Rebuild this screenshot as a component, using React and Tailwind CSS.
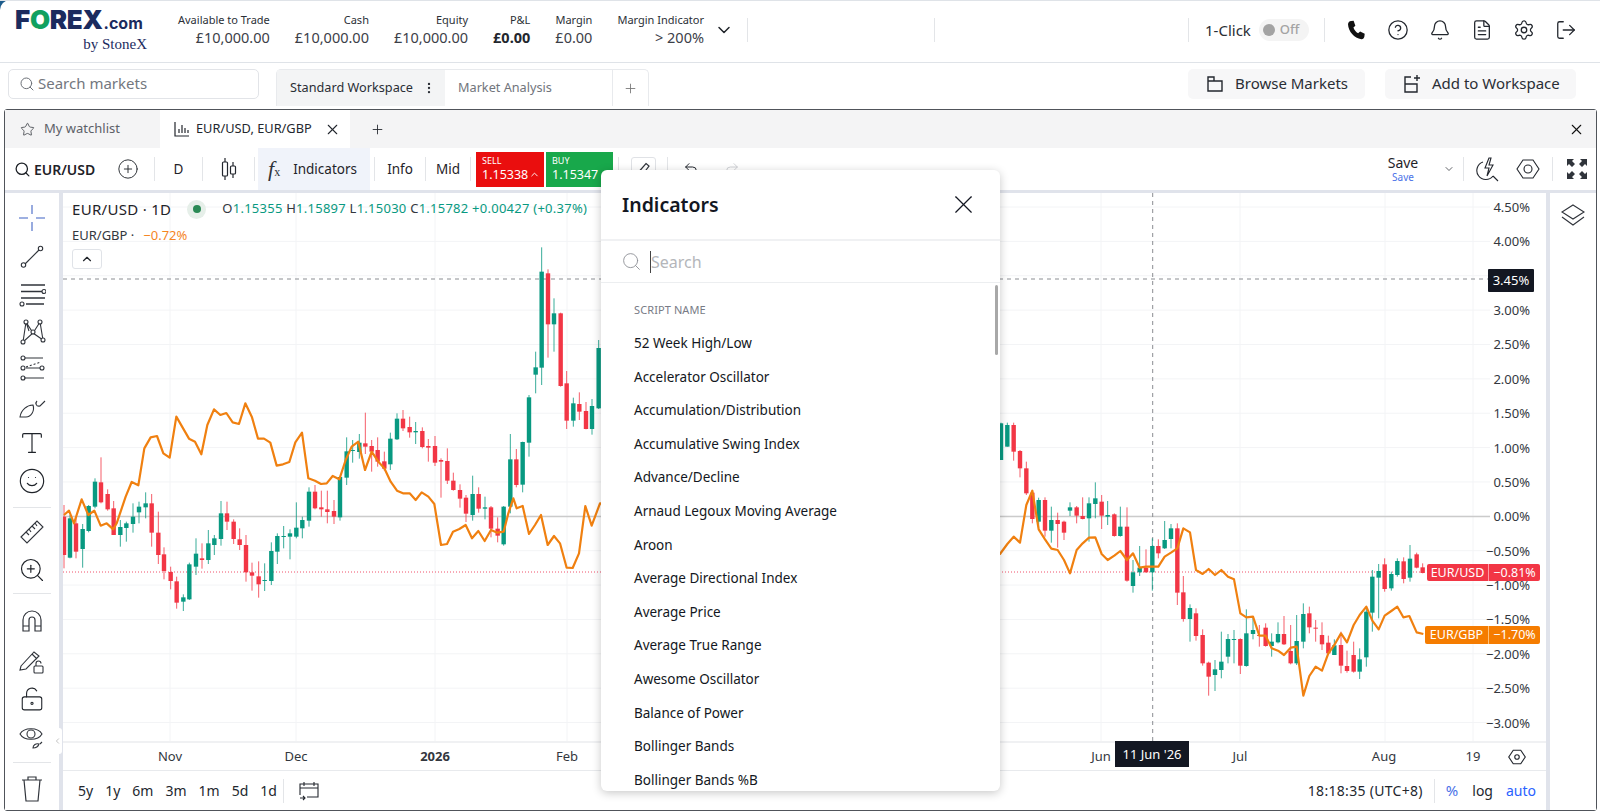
import React from "react";
import {
  Search,
  Star,
  X,
  Plus,
  CircleHelp,
  Bell,
  FileText,
  Settings,
  LogOut,
  ChevronDown,
  ChevronUp,
  ChevronLeft,
  CirclePlus,
  Undo2,
  Redo2,
  EllipsisVertical,
  ZoomIn,
  Smile,
  LockKeyholeOpen,
  Type,
} from "lucide-react";

// candle rows: [x, colour, high, bodyTop, bodyBottom, low], read from the zoomed crops
const g = "g";
const r = "r";
const mk = (ox, oy, rows) =>
  rows.map(([v, c, h, t, b, l]) => ({
    x: ox + v / 3,
    c,
    h: oy + h / 3,
    t: oy + t / 3,
    b: oy + b / 3,
    l: oy + l / 3,
  }));

const candles = [
  ...mk(60, 380, [
    [12, r, 375, 410, 525, 565],
    [30, g, 405, 415, 533, 535],
    [48, r, 410, 430, 515, 535],
    [68, g, 432, 447, 507, 563],
    [86, g, 375, 378, 453, 457],
    [105, g, 295, 305, 380, 385],
    [123, r, 232, 307, 367, 370],
    [143, r, 328, 342, 388, 392],
    [161, r, 363, 385, 465, 465],
    [181, g, 420, 441, 465, 500],
    [199, g, 425, 430, 444, 485],
    [219, g, 370, 410, 432, 458],
    [237, g, 365, 380, 397, 430],
    [257, g, 337, 370, 382, 415],
    [275, r, 342, 370, 458, 500],
    [295, r, 395, 458, 525, 552],
    [312, r, 502, 523, 573, 598],
    [332, r, 560, 576, 603, 628],
    [350, r, 590, 604, 668, 686],
    [370, g, 643, 652, 665, 693],
    [388, g, 548, 553, 658, 660],
    [408, g, 475, 521, 560, 585],
    [426, r, 490, 535, 540, 566],
    [445, g, 450, 490, 540, 552],
    [463, g, 465, 475, 495, 525],
    [483, g, 363, 400, 477, 497],
    [501, r, 365, 400, 425, 450],
    [521, r, 418, 425, 477, 492],
    [539, r, 445, 478, 495, 510],
    [558, r, 465, 495, 577, 605],
    [576, r, 548, 577, 587, 632],
    [596, r, 544, 589, 613, 653],
    [614, g, 550, 600, 603, 633],
    [634, g, 487, 513, 603, 615],
    [652, g, 460, 468, 515, 552],
    [671, g, 438, 468, 470, 505],
    [690, g, 448, 460, 470, 538],
    [709, g, 367, 443, 470, 475],
    [727, g, 410, 420, 445, 475],
    [747, g, 322, 335, 422, 440],
  ]),
  ...mk(300, 230, [
    [45, r, 765, 785, 835, 838],
    [64, r, 782, 832, 838, 860],
    [82, r, 782, 838, 846, 880],
    [102, r, 810, 843, 860, 882],
    [120, g, 740, 741, 862, 872],
    [140, g, 622, 664, 743, 765],
    [158, g, 630, 660, 662, 698],
    [178, g, 612, 638, 666, 686],
    [196, r, 548, 640, 650, 672],
    [215, r, 630, 648, 665, 725],
    [233, r, 622, 660, 695, 710],
    [253, r, 665, 694, 716, 722],
    [271, g, 608, 626, 703, 720],
    [291, g, 550, 566, 628, 630],
    [309, r, 540, 566, 595, 603],
    [329, r, 560, 591, 607, 623],
    [347, g, 576, 603, 607, 642],
    [367, r, 592, 603, 651, 655],
    [385, r, 627, 648, 653, 695],
    [405, r, 618, 648, 698, 708],
    [423, r, 685, 690, 695, 803],
    [442, r, 655, 693, 752, 762],
    [460, r, 728, 752, 780, 782],
    [480, r, 763, 780, 806, 833],
    [498, r, 795, 803, 851, 876],
    [518, g, 737, 792, 855, 872],
    [536, r, 772, 792, 836, 848],
    [555, g, 800, 832, 836, 868],
    [573, r, 828, 832, 896, 922],
    [593, r, 862, 896, 917, 937],
    [611, g, 828, 830, 943, 947],
    [631, g, 612, 688, 830, 850],
    [649, r, 657, 688, 765, 772],
    [668, g, 635, 636, 764, 787],
    [687, g, 495, 502, 638, 680],
    [707, g, 365, 412, 434, 490],
    [725, g, 52, 125, 413, 465],
    [744, r, 118, 130, 283, 383],
    [762, g, 205, 250, 283, 365],
    [782, r, 248, 250, 468, 470],
    [800, r, 423, 460, 572, 597],
    [820, g, 503, 520, 572, 590],
    [838, r, 487, 522, 545, 570],
    [858, r, 516, 543, 597, 598],
    [876, g, 507, 528, 597, 614],
    [896, g, 330, 354, 535, 537],
  ]),
  ...mk(1000, 400, [
    [3, g, 68, 70, 180, 180],
    [22, g, 68, 75, 140, 140],
    [41, r, 68, 75, 155, 182],
    [60, r, 150, 153, 205, 232],
    [79, r, 185, 205, 280, 285],
    [97, r, 270, 278, 357, 370],
    [116, g, 293, 300, 365, 385],
    [135, r, 292, 300, 392, 410],
    [154, g, 320, 360, 392, 428],
    [173, r, 338, 360, 372, 443],
    [192, r, 362, 365, 398, 420],
    [210, g, 307, 322, 332, 348],
    [230, r, 318, 322, 347, 370],
    [248, r, 292, 348, 357, 358],
    [267, g, 292, 310, 355, 425],
    [286, g, 247, 295, 312, 355],
    [305, r, 285, 305, 347, 387],
    [323, g, 303, 345, 350, 375],
    [343, r, 340, 343, 408, 410],
    [361, g, 320, 380, 408, 410],
    [381, r, 322, 380, 542, 545],
    [399, g, 480, 517, 558, 578],
    [419, g, 438, 503, 517, 528],
    [438, r, 448, 503, 517, 518],
    [457, g, 415, 438, 517, 572],
    [475, r, 418, 438, 460, 475],
    [494, g, 363, 420, 445, 447],
    [513, g, 372, 385, 417, 445],
    [532, r, 370, 385, 578, 615],
    [550, r, 528, 577, 657, 665],
    [570, g, 613, 624, 657, 725],
    [588, r, 625, 640, 708, 722],
    [608, r, 688, 705, 790, 797],
    [626, r, 785, 788, 830, 887],
    [645, g, 780, 808, 825, 873],
    [664, g, 695, 785, 810, 835],
    [684, g, 702, 717, 770, 790],
    [702, g, 690, 717, 719, 790],
    [721, r, 715, 717, 797, 822],
    [739, g, 628, 700, 798, 800],
    [759, g, 648, 690, 702, 718],
    [778, r, 675, 705, 707, 740],
    [797, r, 670, 683, 738, 740],
    [815, g, 700, 725, 738, 770],
    [834, g, 667, 702, 727, 730],
    [852, r, 648, 702, 733, 735],
    [872, r, 675, 753, 790, 793],
    [890, g, 645, 723, 790, 795],
    [910, g, 610, 642, 725, 745],
    [928, r, 620, 640, 682, 700],
    [947, r, 660, 683, 685, 725],
    [966, r, 667, 705, 733, 750],
    [985, r, 707, 728, 760, 762],
    [1003, g, 718, 736, 765, 765],
    [1023, r, 695, 735, 797, 820],
    [1041, r, 752, 798, 813, 818],
    [1061, r, 725, 765, 815, 818],
    [1079, g, 745, 778, 815, 837],
    [1099, g, 620, 635, 772, 800],
    [1117, g, 510, 530, 638, 695],
    [1136, g, 492, 513, 533, 655],
    [1154, r, 475, 493, 567, 575],
    [1174, g, 515, 522, 565, 572],
    [1192, g, 475, 483, 525, 530],
  ]),
  ...mk(1280, 540, [
    [371, r, 52, 64, 117, 130],
    [390, g, 15, 56, 113, 125],
    [410, r, 38, 43, 83, 85],
    [428, r, 70, 82, 99, 100],
  ]),
];

const pts = (ox, oy, list) => list.map(([x, y]) => `${ox + x / 3},${oy + y / 3}`).join(" ");

const orange = [
  pts(60, 380, [[12, 405], [27, 392], [42, 430], [65, 358], [85, 405], [103, 392], [122, 437], [140, 430], [160, 448], [170, 430], [197, 350], [215, 306], [235, 316], [253, 205], [272, 172], [291, 168], [310, 220], [329, 233], [349, 110], [368, 143], [387, 176], [405, 185], [424, 223], [442, 135], [462, 88], [481, 105], [499, 99], [518, 127], [537, 132], [556, 70], [576, 112], [594, 176], [612, 176], [631, 188], [650, 257], [669, 253], [688, 246], [706, 187], [726, 158]]),
  pts(300, 230, [[25, 745], [45, 752], [63, 762], [80, 760], [98, 738], [118, 748], [137, 690], [155, 650], [175, 635], [195, 720], [215, 665], [235, 695], [253, 715], [272, 755], [291, 782], [309, 790], [329, 790], [347, 810], [365, 787], [385, 800], [403, 822], [423, 945], [441, 942], [459, 905], [478, 897], [497, 885], [516, 925], [535, 903], [554, 933], [573, 900], [592, 908], [611, 905], [625, 850], [640, 805], [650, 835], [668, 828], [687, 912], [705, 885], [723, 855], [743, 945], [762, 918], [780, 940], [800, 1013], [818, 1014], [837, 970], [856, 828], [875, 887], [900, 820]]),
  pts(1000, 400, [[0, 462], [22, 432], [41, 410], [60, 428], [79, 315], [97, 272], [116, 388], [135, 418], [154, 446], [173, 450], [192, 480], [210, 520], [230, 450], [248, 430], [267, 413], [286, 412], [305, 462], [323, 480], [343, 467], [361, 453], [381, 480], [399, 460], [419, 503], [438, 500], [457, 500], [475, 500], [494, 470], [513, 458], [532, 445], [550, 385], [570, 397], [588, 510], [608, 522], [626, 507], [645, 525], [664, 510], [684, 530], [702, 538], [721, 640], [739, 652], [759, 650], [778, 707], [797, 707], [815, 745], [834, 752], [852, 765], [872, 743], [890, 740], [910, 887], [928, 828], [947, 800], [966, 812], [985, 760], [1003, 735], [1023, 700], [1041, 727], [1061, 675], [1079, 645], [1099, 620], [1117, 662], [1136, 688], [1154, 647], [1174, 633], [1192, 620]]),
  pts(1280, 540, [[370, 232], [388, 228], [410, 277], [430, 282]]),
].join(" ");

const priceLabels = [
  "4.50%", "4.00%", "3.50%", "3.00%", "2.50%", "2.00%", "1.50%", "1.00%", "0.50%", "0.00%",
  "−0.50%", "−1.00%", "−1.50%", "−2.00%", "−2.50%", "−3.00%",
];
const gridY = priceLabels.map((_, i) => 207 + i * 34.37);
const gridX = [170, 296, 435, 567, 1101, 1240, 1385, 1473];

const scripts = [
  "52 Week High/Low",
  "Accelerator Oscillator",
  "Accumulation/Distribution",
  "Accumulative Swing Index",
  "Advance/Decline",
  "Arnaud Legoux Moving Average",
  "Aroon",
  "Average Directional Index",
  "Average Price",
  "Average True Range",
  "Awesome Oscillator",
  "Balance of Power",
  "Bollinger Bands",
  "Bollinger Bands %B",
];

const Stat = ({ label, value, bold }) => (
  <div className="flex flex-col items-end">
    <span className="text-[11px] leading-[16px] text-[#2b2f36] whitespace-nowrap">{label}</span>
    <span className={`text-[14.5px] leading-[18px] whitespace-nowrap ${bold ? "font-bold text-[#23272e]" : "text-[#3c4048]"}`}>
      {value}
    </span>
  </div>
);

const Divider = ({ h = "h-[24px]" }) => <div className={`w-px bg-[#e3e5e8] ${h}`} />;

// thin line tool icons for the left drawing column
const Tool = ({ children }) => (
  <svg width="28" height="28" viewBox="0 0 28 28" fill="none" stroke="#30343b" strokeWidth="1.1" className="block">
    {children}
  </svg>
);

const tools = [
  (
    <Tool>
      <path d="M14 1v9M14 18v9M1 14h9M18 14h9" stroke="#7f97d8" strokeWidth="1.6" />
    </Tool>
  ),
  (
    <Tool>
      <path d="M7 22 21 8" />
      <circle cx="5.5" cy="23" r="2.2" />
      <circle cx="22.5" cy="6.5" r="2.2" />
    </Tool>
  ),
  (
    <Tool>
      <path d="M3 6h24M3 12.5h21M3 19h24M8 25h18" strokeWidth="1.4" />
      <circle cx="26" cy="12.5" r="2" />
      <circle cx="4" cy="25" r="2" />
    </Tool>
  ),
  (
    <Tool>
      <path d="m8 5 7 11-10 9M8 5 5 25M22 5l-7 11 10 7M22 5l3 18M8 5l3 9" />
      <circle cx="8" cy="5" r="2" fill="#fff" />
      <circle cx="22" cy="5" r="2" fill="#fff" />
      <circle cx="15" cy="15" r="2" fill="#fff" />
      <circle cx="5" cy="25" r="2" fill="#fff" />
      <circle cx="25" cy="23" r="2" fill="#fff" />
    </Tool>
  ),
  (
    <Tool>
      <path d="M7 4h18M8 14h14M6 24h20" />
      <path d="M8 13l15-5" strokeDasharray="2 2" />
      <circle cx="5" cy="4" r="2" />
      <circle cx="5" cy="14" r="2" />
      <circle cx="24" cy="14" r="2" />
      <circle cx="5" cy="24" r="2" />
    </Tool>
  ),
  (
    <Tool>
      <path d="M2 25c1-7 7-12 13-12 2 6-2 12-7 12H2Z" />
      <path d="M19 9c-2 2-1 6 3 5l5-5" />
    </Tool>
  ),
];

const App = () => {
  return (
    <div className="w-[1600px] h-[811px] overflow-hidden bg-[#1d5c8c] font-['Noto_Sans',sans-serif] text-[#1f2329]">
      <div className="relative w-full h-full bg-white rounded-tl-[10px] flex flex-col">
        {/* account header */}
        <header className="h-[63px] shrink-0 flex items-center pb-[3px] border-t border-b border-[#dfe3e8]">
          <div className="w-[178px] shrink-0 pl-[15px]">
            <div className="flex items-baseline leading-[26px] whitespace-nowrap font-['Inter',sans-serif]">
              <span className="text-[26px] font-black text-[#1b2b5e] tracking-[-0.3px]">F</span>
              <span className="text-[26px] font-black text-[#10a160] tracking-[-0.3px]">O</span>
              <span className="text-[26px] font-black text-[#1b2b5e] tracking-[-0.3px]">REX</span>
              <span className="text-[16px] font-bold text-[#1b2b5e] ml-[1px]">.com</span>
            </div>
            <div className="w-[132px] text-right text-[15px] leading-[17px] text-[#1b2b5e] font-['Liberation_Serif',serif] whitespace-nowrap">
              by StoneX
            </div>
          </div>
          <div className="flex gap-[25px] mb-[3px]">
            <Stat label="Available to Trade" value="£10,000.00" />
            <Stat label="Cash" value="£10,000.00" />
            <Stat label="Equity" value="£10,000.00" />
            <Stat label="P&L" value="£0.00" bold />
            <Stat label="Margin" value="£0.00" />
            <Stat label="Margin Indicator" value="> 200%" />
          </div>
          <ChevronDown size={20} strokeWidth={1.8} className="ml-[10px] mr-[13px] text-[#20242a]" />
          <Divider />
          <div className="w-[186px]" />
          <Divider />
          <div className="w-[253px]" />
          <Divider />
          <span className="ml-[16px] text-[15px] text-[#2a2e35]">1-Click</span>
          <div className="ml-[8px] w-[50px] h-[22px] rounded-full bg-[#f4f4f4] flex items-center pl-[4px] gap-[5px]">
            <span className="w-[12px] h-[12px] rounded-full bg-[#a3a3a3]" />
            <span className="text-[13px] font-medium text-[#a3a3a3]">Off</span>
          </div>
          <div className="ml-[15px]">
            <Divider />
          </div>
          <div className="flex items-center gap-[20px] ml-[20px] text-[#23272e]">
            <svg width="22" height="22" viewBox="0 0 24 24" fill="#111">
              <path d="M6.6 2.2 9.4 2l1.9 5.3-2.1 1.9c.8 2.6 2.7 5 5.1 6.3l2.2-1.8 5 2.3-.4 3.3c-.2 1.2-1.6 3-3.2 2.8C10 21 3.7 13.600 3.300 6c-.1-2 1.500-3.600 3.300-3.800Z" />
            </svg>
            <CircleHelp size={22} strokeWidth={1.4} />
            <Bell size={22} strokeWidth={1.4} />
            <FileText size={22} strokeWidth={1.4} />
            <Settings size={22} strokeWidth={1.4} />
            <LogOut size={22} strokeWidth={1.4} />
          </div>
        </header>

        {/* search + workspaces row */}
        <div className="h-[46px] shrink-0 flex items-start pt-[6px] pl-[8px]">
          <div className="w-[251px] h-[30px] border border-[#e2e4e8] rounded-[5px] flex items-center pl-[10px] gap-[3px]">
            <Search size={16} strokeWidth={1.5} className="text-[#6d7178]" />
            <span className="text-[15px] leading-[20px] pb-[2px] text-[#73777e]">Search markets</span>
          </div>
          <div className="ml-[17px] h-[37px] flex border border-b-0 border-[#e8eaed] rounded-t-[5px] text-[12.7px]">
            <div className="w-[168px] bg-[#f3f4f5] flex items-center pl-[13px] text-[#2a2e35] whitespace-nowrap">
              Standard Workspace
              <EllipsisVertical size={14} className="ml-[9px]" />
            </div>
            <div className="w-[168px] flex items-center pl-[13px] text-[#71757c] border-r border-[#e8eaed]">
              Market Analysis
            </div>
            <div className="w-[35px] flex items-center justify-center text-[#777]">
              <Plus size={15} strokeWidth={1.4} />
            </div>
          </div>
          <div className="ml-auto flex gap-[20px] pr-[24px]">
            <div className="w-[177px] h-[30px] bg-[#f7f7f8] rounded-[5px] flex items-center pl-[18px] gap-[11px] text-[15px] text-[#2a2e35]">
              <svg width="18" height="18" viewBox="0 0 18 18" fill="none" stroke="#23272e" strokeWidth="1.4">
                <path d="M2 16V2h6v4h8v10H2ZM2 6h6" />
              </svg>
              <span className="pb-[2px]">Browse Markets</span>
            </div>
            <div className="w-[191px] h-[30px] bg-[#f7f7f8] rounded-[5px] flex items-center pl-[18px] gap-[11px] text-[15px] text-[#2a2e35]">
              <svg width="18" height="20" viewBox="0 0 18 20" fill="none" stroke="#23272e" strokeWidth="1.4">
                <path d="M8 3H2v15h12v-8H2M14 1v6M11 4h6" />
              </svg>
              <span className="pb-[2px]">Add to Workspace</span>
            </div>
          </div>
        </div>

        {/* widget window */}
        <div className="flex-1 min-h-0 ml-[4px] mr-[3px] flex flex-col border border-[#50545a] rounded-[3px]">
          {/* widget tabs */}
          <div className="h-[38px] shrink-0 flex items-center bg-[#f4f4f5] text-[13px]">
            <div className="w-[155px] h-full flex items-center pl-[15px] gap-[9px] text-[#5d6168]">
              <Star size={15} strokeWidth={1.3} className="text-[#3c4046]" />
              My watchlist
            </div>
            <div className="w-[190px] h-full bg-white flex items-center pl-[14px] text-[12.8px] text-[#23272e] whitespace-nowrap">
              <svg width="16" height="16" viewBox="0 0 16 16" fill="none" stroke="#23272e" strokeWidth="1.2">
                <path d="M1 1v14h14M5 12V8M8 12V4M11 12V7M14 12V9" />
              </svg>
              <span className="ml-[6px]">EUR/USD, EUR/GBP</span>
              <X size={17} strokeWidth={1.5} className="ml-[12px]" />
            </div>
            <Plus size={15} strokeWidth={1.4} className="ml-[20px] text-[#23272e]" />
            <X size={17} strokeWidth={1.5} className="ml-auto mr-[11px] text-[#111]" />
          </div>

          {/* chart toolbar */}
          <div className="h-[42px] shrink-0 flex items-center bg-white text-[13.5px]">
            <Search size={17} strokeWidth={1.8} className="ml-[9px] text-[#1b1f25]" />
            <span className="ml-[3px] font-semibold text-[14px] w-[60px]">EUR/USD</span>
            <CirclePlus size={22} strokeWidth={1} className="ml-[23px]" />
            <div className="ml-[15px]"><Divider /></div>
            <span className="w-[47px] text-center">D</span>
            <Divider />
            <svg width="18" height="24" viewBox="0 0 18 24" fill="none" stroke="#23272e" strokeWidth="1.2" className="ml-[17px]">
              <path d="M5 1v4M5 19v4M13 5v4M13 17v4" />
              <rect x="2.500" y="5" width="5" height="14" rx="1" />
              <rect x="10.500" y="9" width="5" height="8" rx="1" />
            </svg>
            <div className="ml-[16px]"><Divider /></div>
            <div className="ml-[3px] w-[112px] h-full bg-[#f0f3fa] flex items-center pl-[10px] gap-[13px]">
              <span className="font-['Liberation_Serif',serif] italic text-[22px] leading-none text-[#30343b]">
                f<span className="text-[12px] not-italic">x</span>
              </span>
              <span>Indicators</span>
            </div>
            <div className="ml-[4px]"><Divider /></div>
            <span className="w-[50px] text-center">Info</span>
            <Divider />
            <span className="w-[44px] text-center">Mid</span>
            <Divider />
            <div className="ml-[5px] w-[68px] h-[35px] bg-[#ea0e0e] text-white pl-[6px] flex flex-col justify-center">
              <span className="text-[9px] leading-[10px]">SELL</span>
              <span className="text-[12.5px] leading-[17px] whitespace-nowrap flex items-center">
                1.15338
                <ChevronUp size={11} strokeWidth={2} className="ml-[1px]" />
              </span>
            </div>
            <div className="ml-[2px] w-[67px] h-[35px] bg-[#18a84b] text-white pl-[6px] flex flex-col justify-center">
              <span className="text-[9px] leading-[10px]">BUY</span>
              <span className="text-[12.5px] leading-[17px] whitespace-nowrap flex items-center">
                1.15347
                <ChevronUp size={11} strokeWidth={2} className="ml-[1px]" />
              </span>
            </div>
            <div className="ml-[5px]"><Divider /></div>
            <div className="ml-[12px] w-[25px] h-[25px] border border-[#e0e2e6] rounded-[3px] flex items-start justify-center pt-[4px]">
              <svg width="14" height="14" viewBox="0 0 14 14" fill="none" stroke="#30343b" strokeWidth="1.200">
                <path d="M9 1.500 12 4 6 12H3l-.5-3L9 1.500Z" />
              </svg>
            </div>
            <div className="ml-[11px]"><Divider /></div>
            <Undo2 size={16} strokeWidth={1.5} className="ml-[15px] text-[#23272e]" />
            <Redo2 size={16} strokeWidth={1.2} className="ml-[25px] text-[#c4c7cc]" />
            <div className="ml-auto flex items-center">
              <div className="flex flex-col items-center w-[32px] leading-none">
                <span className="text-[14px] leading-[16px]">Save</span>
                <span className="text-[10px] leading-[12px] text-[#4a72e8]">Save</span>
              </div>
              <ChevronDown size={12} strokeWidth={1.4} className="ml-[24px]" />
              <div className="ml-[8px]"><Divider /></div>
              <svg width="24" height="26" viewBox="0 0 24 26" fill="none" stroke="#23272e" strokeWidth="1.1" className="ml-[12px]">
                <path d="M7 6a9 9 0 1 0 10 14M17 20l5 5M13 2l-4 10h4l-2 8 6-11h-4l2-7h-2Z" />
              </svg>
              <svg width="24" height="24" viewBox="0 0 24 24" fill="none" stroke="#23272e" strokeWidth="1.1" className="ml-[16px]">
                <path d="M7 3h10l6 9-6 9H7l-6-9 6-9Z" />
                <circle cx="12" cy="12" r="4" />
              </svg>
              <div className="ml-[12px]"><Divider /></div>
              <svg width="22" height="22" viewBox="0 0 22 22" fill="#30343b" className="ml-[13px] mr-[8px]">
                <path d="M1 1h7L6 3l3 3-3 3-3-3-2 2V1ZM21 1v7l-2-2-3 3-3-3 3-3-2-2h7ZM1 21v-7l2 2 3-3 3 3-3 3 2 2H1ZM21 21h-7l2-2-3-3 3-3 3 3 2-2v7Z" />
              </svg>
            </div>
          </div>

          {/* chart body */}
          <div className="flex-1 min-h-0 flex bg-[#e0e3eb] pt-[3px] gap-[4px]">
            {/* drawing tools */}
            <div className="w-[54px] shrink-0 bg-white flex flex-col items-center pt-[11px]">
              <div className="flex flex-col items-center gap-[9.500px]">
                {tools.map((el, i) => (
                  <div key={i}>{el}</div>
                ))}
                <Type size={28} strokeWidth={1} />
                <Smile size={28} strokeWidth={1} />
              </div>
              <div className="w-[38px] h-px bg-[#e3e5e8] mt-[12px] mb-[10px]" />
              <div className="flex flex-col items-center gap-[10px]">
                <Tool>
                  <path d="m3 19 16-16 6 6-16 16-6-6Zm5-5 3 3m0-6 2 3m1-6 3 3m0-6 2 3" />
                </Tool>
                <ZoomIn size={28} strokeWidth={1} />
              </div>
              <div className="w-[38px] h-px bg-[#e3e5e8] mt-[9px] mb-[14px]" />
              <div className="flex flex-col items-center gap-[12px]">
                <svg width="26" height="26" viewBox="0 0 26 26" fill="none" stroke="#30343b" strokeWidth="1.2">
                  <path d="M4 23V12a9 9 0 0 1 18 0v11h-6V12a3 3 0 0 0-6 0v11H4ZM4 18h6M16 18h6" />
                </svg>
                <svg width="28" height="28" viewBox="0 0 28 28" fill="none" stroke="#30343b" strokeWidth="1.1">
                  <path d="M3 20 16 6l5 4-13 13-6 1 1-4ZM14 8l5 5" />
                  <rect x="16" y="20" width="9" height="7" rx="1" />
                  <path d="M18 20v-2.500a2.500 2.500 0 0 1 5 0" />
                </svg>
                <LockKeyholeOpen size={26} strokeWidth={1} />
                <svg width="28" height="26" viewBox="0 0 28 26" fill="none" stroke="#30343b" strokeWidth="1.1">
                  <path d="M2 10C6 3 20 3 24 10c-4 7-18 7-22 0Z" />
                  <circle cx="13" cy="10" r="4" />
                  <path d="M15 24c0-3 3-5 6-4-1 3-3 4-6 4ZM24 18l-2 2" />
                </svg>
              </div>
              <div className="w-[38px] h-px bg-[#e3e5e8] mt-[12px] mb-[11px]" />
              <svg width="28" height="30" viewBox="0 0 28 30" fill="none" stroke="#30343b" strokeWidth="1.2">
                <path d="M4 6h20M10 6V3h8v3M6 6l2 21h12l2-21" />
              </svg>
            </div>

            {/* chart pane */}
            <div className="relative flex-1 min-w-0 bg-white flex flex-col">
              <div className="relative h-[548px] shrink-0 overflow-hidden">
                <svg width="1481" height="548" viewBox="63 193 1481 548" className="block">
                  {gridY.map((y) => (
                    <line key={y} x1="63" x2="1490" y1={y} y2={y} stroke="#f3f4f6" />
                  ))}
                  {gridX.map((x) => (
                    <line key={x} x1={x} x2={x} y1="193" y2="741" stroke="#f3f4f6" />
                  ))}
                  <line x1="63" x2="1490" y1="516.500" y2="516.500" stroke="#cbcbcb" strokeWidth="1.300" />
                  <line x1="63" x2="1425" y1="572" y2="572" stroke="#f0506a" strokeDasharray="1 2" />
                  <line x1="63" x2="1490" y1="279" y2="279" stroke="#8a8d92" strokeDasharray="4 4" />
                  <line x1="1152.700" x2="1152.700" y1="193" y2="741" stroke="#8a8d92" strokeDasharray="4 4" />
                  {candles.map((k, i) => {
                    const col = k.c === "g" ? "#089981" : "#f23645";
                    return (
                      <g key={i}>
                        <line x1={k.x} x2={k.x} y1={k.h} y2={k.l} stroke={col} strokeOpacity="0.8" />
                        <rect x={k.x - 2.2} y={k.t} width="4.400" height={Math.max(k.b - k.t, 1)} fill={col} />
                      </g>
                    );
                  })}
                  <polyline points={orange} fill="none" stroke="#f08010" strokeWidth="2.200" strokeLinejoin="round" />
                </svg>

                {/* price scale labels */}
                <div className="absolute inset-0 text-[13px] text-[#33373e]">
                  {priceLabels.map((p, i) =>
                    p === "3.50%" ? null : (
                      <span
                        key={p}
                        className="absolute right-[16px] leading-[16px] -translate-y-1/2"
                        style={{ top: gridY[i] - 193 }}
                      >
                        {p}
                      </span>
                    )
                  )}
                  <span className="absolute left-[1425px] top-[76px] w-[46px] h-[23px] bg-[#131722] text-white text-center leading-[23px] rounded-[1px]">
                    3.45%
                  </span>
                  <div className="absolute left-[1364px] top-[371px] flex h-[17px] text-white leading-[17px] text-[12.500px] rounded-[2px] overflow-hidden">
                    <span className="w-[61px] bg-[#f23645] text-center">EUR/USD</span>
                    <span className="w-[52px] bg-[#f23645] text-center border-l border-[#ff9aa6]">−0.81%</span>
                  </div>
                  <div className="absolute left-[1362px] top-[433px] flex h-[18px] text-white leading-[18px] text-[12.500px] rounded-[2px] overflow-hidden">
                    <span className="w-[63px] bg-[#f57c00] text-center">EUR/GBP</span>
                    <span className="w-[52px] bg-[#f57c00] text-center border-l border-[#ffc27a]">−1.70%</span>
                  </div>
                </div>

                {/* legend */}
                <div className="absolute left-[9px] top-[6px] text-[13px]">
                  <div className="flex items-center h-[20px]">
                    <span className="text-[15px] tracking-[0.3px] whitespace-nowrap">EUR/USD · 1D</span>
                    <span className="ml-[16px] w-[19px] h-[19px] rounded-full bg-[#e6efe9] flex items-center justify-center">
                      <span className="w-[8px] h-[8px] rounded-full bg-[#2a8a55]" />
                    </span>
                    <span className="ml-[16px] text-[13px] tracking-[0.25px] text-[#089981] whitespace-nowrap">
                      <span className="text-[#33373e]">O</span>1.15355 <span className="text-[#33373e]">H</span>1.15897{" "}
                      <span className="text-[#33373e]">L</span>1.15030 <span className="text-[#33373e]">C</span>1.15782 +0.00427 (+0.37%)
                    </span>
                  </div>
                  <div className="mt-[7px] h-[20px] flex items-center text-[13px] whitespace-nowrap">
                    <span className="text-[#33373e]">EUR/GBP ·</span>
                    <span className="ml-[9px] text-[#f5861f]">−0.72%</span>
                  </div>
                  <div className="mt-[3px] w-[30px] h-[20px] border border-[#e0e3e8] rounded-[3px] flex items-center justify-center bg-white">
                    <ChevronUp size={14} strokeWidth={2} />
                  </div>
                </div>
              </div>

              {/* time axis */}
              <div className="relative h-[29px] shrink-0 border-t-2 border-[#f0f1f3] text-[13px] text-[#33373e]">
                <span className="absolute left-[107px] -translate-x-1/2 top-[4px]">Nov</span>
                <span className="absolute left-[233px] -translate-x-1/2 top-[4px]">Dec</span>
                <span className="absolute left-[372px] -translate-x-1/2 top-[4px] font-bold">2026</span>
                <span className="absolute left-[504px] -translate-x-1/2 top-[4px]">Feb</span>
                <span className="absolute left-[1038px] -translate-x-1/2 top-[4px]">Jun</span>
                <span className="absolute left-[1177px] -translate-x-1/2 top-[4px]">Jul</span>
                <span className="absolute left-[1321px] -translate-x-1/2 top-[4px]">Aug</span>
                <span className="absolute left-[1410px] -translate-x-1/2 top-[4px]">19</span>
                <span className="absolute left-[1052px] top-[-2px] w-[74px] h-[26px] bg-[#131722] text-white text-center leading-[26px] whitespace-nowrap">
                  11 Jun '26
                </span>
                <svg width="18" height="18" viewBox="0 0 24 24" fill="none" stroke="#23272e" strokeWidth="1.500" className="absolute left-[1445px] top-[5px]">
                  <path d="M7 3h10l6 9-6 9H7l-6-9 6-9Z" />
                  <circle cx="12" cy="12" r="3" />
                </svg>
              </div>

              {/* range bar */}
              <div className="flex-1 min-h-0 border-t border-[#e8eaed] flex items-center text-[14px] text-[#23272e]">
                <div className="flex items-center gap-[12px] pl-[15px]">
                  {["5y", "1y", "6m", "3m", "1m", "5d", "1d"].map((t) => (
                    <span key={t}>{t}</span>
                  ))}
                </div>
                <div className="ml-[6px]"><Divider /></div>
                <svg width="22" height="20" viewBox="0 0 22 20" fill="none" stroke="#23272e" strokeWidth="1.100" className="ml-[14px]">
                  <path d="M2 14V3h18v13H9M2 7h18M6 1v4M16 1v4M2 17h5m-2-2 2 2-2 2" />
                </svg>
                <div className="ml-auto flex items-center pr-[10px]">
                  <span className="text-[14px] tracking-[0.3px] whitespace-nowrap">18:18:35 (UTC+8)</span>
                  <div className="ml-[11px]"><Divider /></div>
                  <span className="ml-[11px] text-[#4a72e8] text-[15px]">%</span>
                  <span className="ml-[14px]">log</span>
                  <span className="ml-[13px] text-[#2962ff]">auto</span>
                </div>
              </div>

              {/* collapse handle over the pane edge */}
              <div className="absolute left-[-10px] top-[535px] w-[9px] h-[26px] bg-white rounded-[3px] flex items-center justify-center">
                <ChevronLeft size={10} strokeWidth={1.2} className="text-[#777]" />
              </div>
            </div>

            {/* object tree column */}
            <div className="w-[46px] shrink-0 bg-white flex justify-center pt-[10px]">
              <svg width="26" height="24" viewBox="0 0 26 24" fill="none" stroke="#30343b" strokeWidth="1.1">
                <path d="M13 2 24 9l-11 7L2 9l11-7ZM2 14l11 8 11-8" />
              </svg>
            </div>
          </div>
        </div>

        {/* indicators dialog */}
        <div className="absolute left-[601px] top-[170px] w-[399px] h-[621px] bg-white rounded-[6px] shadow-[0_2px_10px_rgba(0,0,0,0.22)] flex flex-col overflow-hidden">
          <div className="h-[71px] shrink-0 flex items-center justify-between pl-[21px] pr-[21px] border-b-2 border-[#f0f1f3]">
            <span className="text-[19.500px] font-semibold text-[#131722]">Indicators</span>
            <X size={31} strokeWidth={0.9} className="text-[#131722]" />
          </div>
          <div className="h-[42px] shrink-0 flex items-center pl-[20px] border-b border-[#eceef0]">
            <Search size={21} strokeWidth={1} className="text-[#8a8d92]" />
            <span className="ml-[8px] h-[22px] w-px bg-[#444]" />
            <span className="text-[16px] text-[#b4b6ba]">Search</span>
          </div>
          <div className="relative flex-1 min-h-0 pl-[33px] pt-[19px]">
            <div className="text-[11px] leading-[16px] text-[#787b86] tracking-[0.1px]">SCRIPT NAME</div>
            <div className="mt-[16px] flex flex-col gap-[15.600px]">
              {scripts.map((s) => (
                <div key={s} className="text-[13.500px] leading-[18px] text-[#131722] whitespace-nowrap">
                  {s}
                </div>
              ))}
            </div>
            <div className="absolute right-[2px] top-[2px] w-[3px] h-[70px] bg-[#a8a8a8] rounded-full" />
          </div>
        </div>
      </div>
    </div>
  );
};

export default App;
